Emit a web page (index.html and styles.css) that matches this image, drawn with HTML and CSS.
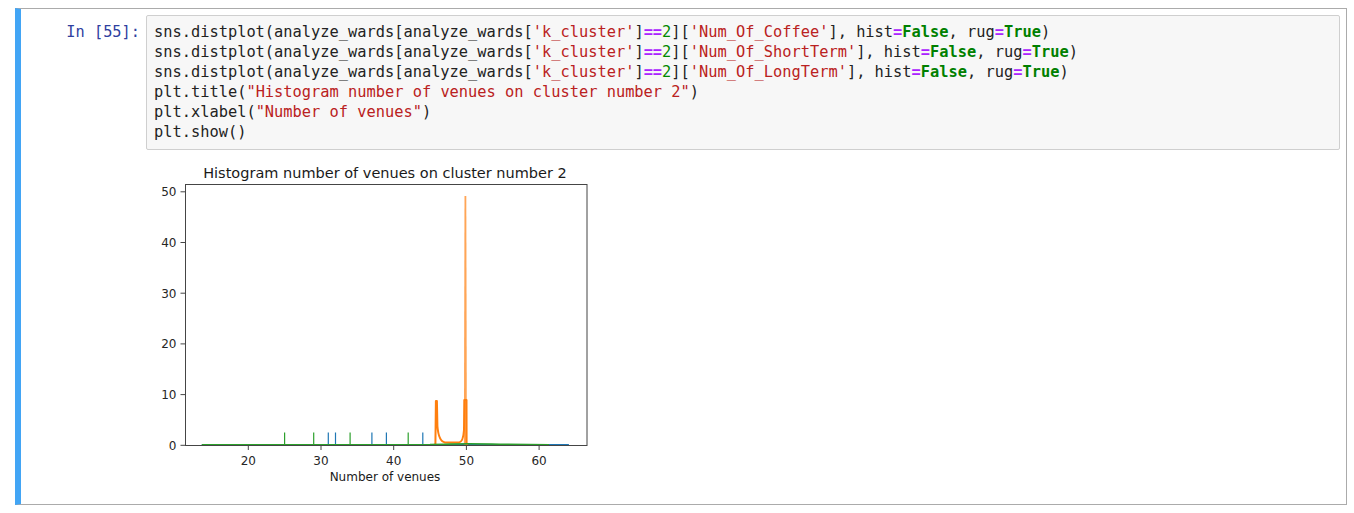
FILE: index.html
```html
<!DOCTYPE html>
<html>
<head>
<meta charset="utf-8">
<link rel="stylesheet" href="styles.css">
</head>
<body>
<div class="cell">
  <div class="row">
    <div class="prompt">In&nbsp;[55]:</div>
    <div class="input-area">
      <div class="line">sns.distplot(analyze_wards[analyze_wards[<span class="s">'k_cluster'</span>]<span class="o">==</span><span class="n">2</span>][<span class="s">'Num_Of_Coffee'</span>], hist<span class="o">=</span><span class="k">False</span>, rug<span class="o">=</span><span class="k">True</span>)</div>
      <div class="line">sns.distplot(analyze_wards[analyze_wards[<span class="s">'k_cluster'</span>]<span class="o">==</span><span class="n">2</span>][<span class="s">'Num_Of_ShortTerm'</span>], hist<span class="o">=</span><span class="k">False</span>, rug<span class="o">=</span><span class="k">True</span>)</div>
      <div class="line">sns.distplot(analyze_wards[analyze_wards[<span class="s">'k_cluster'</span>]<span class="o">==</span><span class="n">2</span>][<span class="s">'Num_Of_LongTerm'</span>], hist<span class="o">=</span><span class="k">False</span>, rug<span class="o">=</span><span class="k">True</span>)</div>
      <div class="line">plt.title(<span class="s">"Histogram number of venues on cluster number 2"</span>)</div>
      <div class="line">plt.xlabel(<span class="s">"Number of venues"</span>)</div>
      <div class="line">plt.show()</div>
    </div>
  </div>
  <div class="row">
    <div class="prompt"></div>
    <div class="output-area">
      <svg class="figure" width="454" height="348" viewBox="0 0 454 348" xmlns="http://www.w3.org/2000/svg">
        <g transform="translate(-146,-150)">
          <rect x="185" y="184" width="402" height="261.5" fill="#fff"/>
          <path d="M201.8 444.9 L568.9 444.9" stroke="#1f77b4" stroke-width="1.6" fill="none"/>
          <g stroke="#1f77b4" stroke-width="1.2">
            <line x1="328.3" y1="445" x2="328.3" y2="432.5"/>
            <line x1="335.5" y1="445" x2="335.5" y2="432.5"/>
            <line x1="371.9" y1="445" x2="371.9" y2="432.5"/>
            <line x1="386.4" y1="445" x2="386.4" y2="432.5"/>
            <line x1="422.8" y1="445" x2="422.8" y2="432.5"/>
          </g>
          <path d="M463.9 445 L464.5 196 L466.3 196 L466.9 445 Z" fill="#ff7f0e" fill-opacity="0.7"/>
          <path d="M434 444.8 L435.4 444.6 L435.9 401 L436.9 401 L437.4 426 C438.2 436, 440 441.8, 445 442.4 L459 442.5 C462 442.2, 463.4 438.5, 464 430 L464.3 400 L466.5 400 L466.6 444.6 L468 444.8" stroke="#ff7f0e" stroke-width="2" fill="none" stroke-linejoin="round"/>
          <path d="M201.8 444.8 L430 444.6 L445 444.2 C458 443.7, 478 443.7, 500 444.2 L549 444.8" stroke="#2ca02c" stroke-width="1.6" fill="none"/>
          <g stroke="#2ca02c" stroke-width="1.2">
            <line x1="284.6" y1="445" x2="284.6" y2="432.5"/>
            <line x1="313.7" y1="445" x2="313.7" y2="432.5"/>
            <line x1="350.1" y1="445" x2="350.1" y2="432.5"/>
            <line x1="408.2" y1="445" x2="408.2" y2="432.5"/>
          </g>
          <rect x="185.5" y="184.5" width="401.5" height="261" fill="none" stroke="#454545" stroke-width="1"/>
          <g stroke="#454545" stroke-width="1">
            <line x1="180.5" y1="445.3" x2="185" y2="445.3"/>
            <line x1="180.5" y1="394.6" x2="185" y2="394.6"/>
            <line x1="180.5" y1="343.9" x2="185" y2="343.9"/>
            <line x1="180.5" y1="293.2" x2="185" y2="293.2"/>
            <line x1="180.5" y1="242.5" x2="185" y2="242.5"/>
            <line x1="180.5" y1="191.8" x2="185" y2="191.8"/>
            <line x1="248.3" y1="446" x2="248.3" y2="450"/>
            <line x1="321" y1="446" x2="321" y2="450"/>
            <line x1="393.7" y1="446" x2="393.7" y2="450"/>
            <line x1="466.4" y1="446" x2="466.4" y2="450"/>
            <line x1="539.1" y1="446" x2="539.1" y2="450"/>
          </g>
          <g class="tick" text-anchor="end">
            <text x="176.5" y="449.6">0</text>
            <text x="176.5" y="398.9">10</text>
            <text x="176.5" y="348.2">20</text>
            <text x="176.5" y="297.5">30</text>
            <text x="176.5" y="246.8">40</text>
            <text x="176.5" y="196.1">50</text>
          </g>
          <g class="tick" text-anchor="middle">
            <text x="248.3" y="464.5">20</text>
            <text x="321" y="464.5">30</text>
            <text x="393.7" y="464.5">40</text>
            <text x="466.4" y="464.5">50</text>
            <text x="539.1" y="464.5">60</text>
          </g>
          <text class="title" x="385" y="177.5" text-anchor="middle">Histogram number of venues on cluster number 2</text>
          <text class="xlabel" x="385" y="481" text-anchor="middle">Number of venues</text>
        </g>
      </svg>
    </div>
  </div>
</div>
</body>
</html>
```
FILE: styles.css
```css
html, body {
  margin: 0;
  background: #ffffff;
}
body {
  padding: 8px 7px 8px 15px;
}
.cell {
  width: 1332px;
  height: 497px;
  box-sizing: border-box;
  border: 1px solid #ababab;
  border-left: 6px solid #42a5f5;
  padding: 6px 6px 6px 0;
  display: flex;
  flex-direction: column;
}
.row {
  display: flex;
  flex-direction: row;
}
.prompt {
  width: 125px;
  flex: none;
  box-sizing: border-box;
  padding: 7px 6px 0 0;
  text-align: right;
  font-family: "DejaVu Sans Mono", "Liberation Mono", monospace;
  font-size: 15.3px;
  line-height: 20px;
  color: #303f9f;
  white-space: nowrap;
}
.input-area {
  flex: 1;
  background: #f7f7f7;
  border: 1px solid #cfcfcf;
  border-radius: 2px;
  padding: 6px 7px 7px 7px;
  height: 135px;
  box-sizing: border-box;
  font-family: "DejaVu Sans Mono", "Liberation Mono", monospace;
  font-size: 15.35px;
  line-height: 20px;
  color: #222222;
}
.line {
  height: 20px;
  white-space: pre;
}
.s { color: #ba2121; }
.o { color: #aa22ff; font-weight: bold; }
.k { color: #008000; font-weight: bold; }
.n { color: #008800; }
.output-area {
  flex: 1;
  height: 348px;
}
.figure {
  display: block;
}
.tick {
  font-family: "DejaVu Sans", sans-serif;
  font-size: 12px;
  fill: #262626;
}
.title {
  font-family: "DejaVu Sans", sans-serif;
  font-size: 14.5px;
  fill: #1a1a1a;
}
.xlabel {
  font-family: "DejaVu Sans", sans-serif;
  font-size: 12px;
  fill: #1a1a1a;
}
```
